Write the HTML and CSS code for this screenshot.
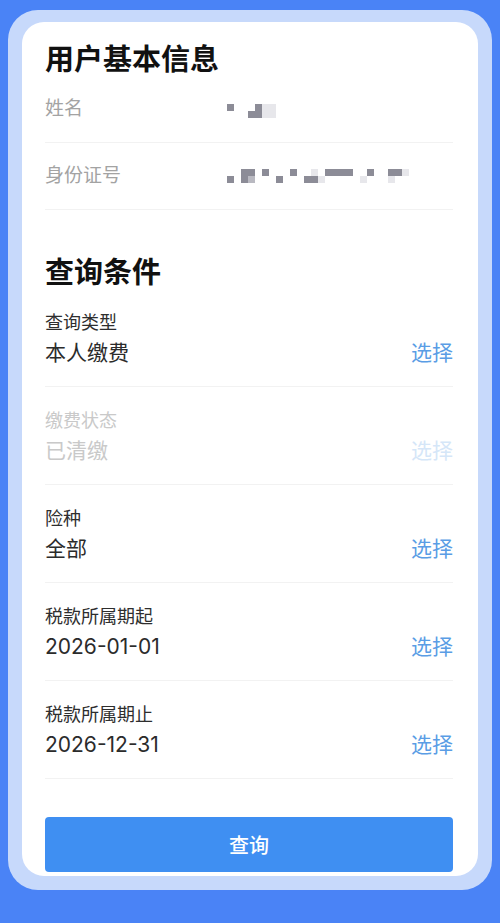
FILE: index.html
```html
<!DOCTYPE html>
<html lang="zh-CN">
<head>
    <meta charset="UTF-8">
    <meta name="viewport" content="width=device-width, initial-scale=1.0">
    <title>缴费查询</title>
    <link rel="stylesheet" href="styles.css">
</head>
<body>
    <div class="frame">
        <div class="card">
            <h2 class="section-title">用户基本信息</h2>
            <div class="info-row">
                <span class="info-label">姓名</span>
                <span class="mosaic mosaic-name">
                    <i class="d"></i><i></i><i></i><i></i><i class="d"></i><i class="l"></i><i class="l"></i>
                    <i></i><i></i><i></i><i class="d"></i><i class="d"></i><i class="l"></i><i class="l"></i>
                </span>
            </div>
            <div class="info-row">
                <span class="info-label">身份证号</span>
                <span class="mosaic mosaic-id">
                    <!-- row 1 -->
                    <i></i><i></i><i class="d"></i><i class="d"></i><i></i><i class="d"></i><i></i><i></i><i></i><i class="d"></i><i></i><i></i><i class="l"></i>
                    <i></i><i class="d"></i><i class="d"></i><i class="d"></i><i class="d"></i><i></i><i></i><i class="d"></i><i></i><i></i><i class="d"></i><i class="d"></i><i class="l"></i>
                    <!-- row 2 -->
                    <i class="d"></i><i></i><i class="d"></i><i class="m"></i><i></i><i></i><i></i><i class="d"></i><i></i><i></i><i></i><i class="d"></i><i class="d"></i>
                    <i class="l"></i><i></i><i></i><i></i><i></i><i></i><i class="l"></i><i></i><i></i><i></i><i class="l"></i><i></i><i></i>
                </span>
            </div>

            <h2 class="section-title section-gap">查询条件</h2>
            <div class="field">
                <div class="field-text">
                    <div class="field-label">查询类型</div>
                    <div class="field-value">本人缴费</div>
                </div>
                <span class="field-action">选择</span>
            </div>
            <div class="field disabled">
                <div class="field-text">
                    <div class="field-label">缴费状态</div>
                    <div class="field-value">已清缴</div>
                </div>
                <span class="field-action">选择</span>
            </div>
            <div class="field">
                <div class="field-text">
                    <div class="field-label">险种</div>
                    <div class="field-value">全部</div>
                </div>
                <span class="field-action">选择</span>
            </div>
            <div class="field">
                <div class="field-text">
                    <div class="field-label">税款所属期起</div>
                    <div class="field-value">2026-01-01</div>
                </div>
                <span class="field-action">选择</span>
            </div>
            <div class="field">
                <div class="field-text">
                    <div class="field-label">税款所属期止</div>
                    <div class="field-value">2026-12-31</div>
                </div>
                <span class="field-action">选择</span>
            </div>

            <button class="submit">查询</button>
        </div>
    </div>
</body>
</html>
```

FILE: styles.css
```css
body {
    margin: 0;
    padding: 10px 8px 33px;
    background: #4a83f6;
    font-family: Inter, 'Noto Sans CJK SC', sans-serif;
    color: #333;
}

.frame {
    background: #c7d9fb;
    border-radius: 30px;
    padding: 12px 14px 14px;
}

.card {
    background: #fff;
    border-radius: 22px;
    padding: 16px 25px 4px 23px;
}

.section-title {
    margin: 0;
    font-size: 29px;
    line-height: 38px;
    font-weight: 700;
    color: #111;
    font-family: 'Noto Sans CJK SC', sans-serif;
}

.section-gap {
    margin-top: 41px;
}

.info-row {
    display: flex;
    align-items: center;
    padding: 21px 0 21px;
    border-bottom: 1px solid #f2f2f2;
}

.info-label {
    width: 182px;
    font-size: 19px;
    line-height: 24px;
    color: #a3a3a3;
}

.mosaic {
    display: grid;
    grid-auto-rows: 7px;
}

.mosaic-name {
    grid-template-columns: repeat(7, 7px);
    margin-top: 3px;
}

.mosaic-id {
    grid-template-columns: repeat(26, 7px);
}

.mosaic i.d {
    background: #8c8c97;
}

.mosaic i.m {
    background: #b9b9c1;
}

.mosaic i.l {
    background: #e7e7eb;
}

.field {
    display: flex;
    justify-content: space-between;
    align-items: flex-end;
    padding: 23px 0 19px;
    border-bottom: 1px solid #f2f2f2;
}

.field-label {
    font-size: 18px;
    line-height: 22px;
    color: #2e2e2e;
}

.field-value {
    margin-top: 5px;
    font-size: 21px;
    line-height: 28px;
    color: #2b2b2b;
}

.field-action {
    font-size: 21px;
    line-height: 28px;
    color: #5a9de5;
}

.field.disabled .field-label,
.field.disabled .field-value {
    color: #c9c9c9;
}

.field.disabled .field-action {
    color: #d5e6f8;
}

.submit {
    display: block;
    width: 100%;
    height: 55px;
    margin-top: 38px;
    border: none;
    border-radius: 4px;
    background: #3f8ff2;
    color: #fff;
    font-family: 'Noto Sans CJK SC', sans-serif;
    font-size: 20px;
    font-weight: 500;
    cursor: pointer;
}
```
